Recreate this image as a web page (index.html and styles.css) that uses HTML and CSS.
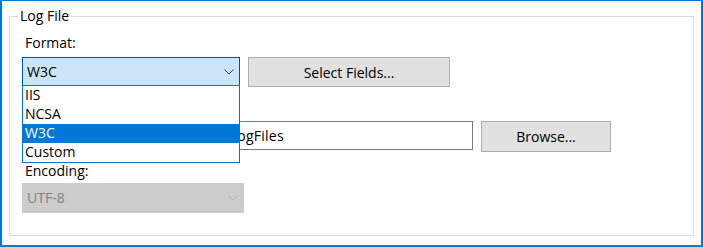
FILE: index.html
```html
<!DOCTYPE html>
<html lang="en">
<head>
    <meta charset="UTF-8"/>
    <title>Log File</title>
    <link rel="stylesheet" href="styles.css">
</head>
<body>

<div class="window">
    <fieldset class="group">
        <legend>Log File</legend>

        <!-- Format -->
        <div class="field-label">Format:</div>
        <div class="row">
            <div class="combo open">
                <span class="combo-value">W3C</span>
                <svg class="chevron" width="10" height="6" viewBox="0 0 10 6">
                    <polyline points="0.5,0.5 5,5 9.5,0.5" fill="none" stroke="#3c3c3c" stroke-width="1"/>
                </svg>
                <ul class="combo-list">
                    <li>IIS</li>
                    <li>NCSA</li>
                    <li class="selected">W3C</li>
                    <li>Custom</li>
                </ul>
            </div>
            <button class="btn btn-fields">Select Fields...</button>
        </div>

        <!-- Directory (label is covered by the open list) -->
        <div class="field-label label-dir"></div>
        <div class="row row-top">
            <input class="text-input" type="text" value="%SystemDrive%\inetpub\logs\LogFiles">
            <button class="btn btn-browse">Browse...</button>
        </div>

        <!-- Encoding -->
        <div class="field-label label-enc">Encoding:</div>
        <div class="combo disabled encoding">
            <span class="combo-value">UTF-8</span>
            <svg class="chevron" width="10" height="6" viewBox="0 0 10 6">
                <polyline points="0.5,0.5 5,5 9.5,0.5" fill="none" stroke="#b4b4b4" stroke-width="1"/>
            </svg>
        </div>
    </fieldset>
</div>

</body>
</html>
```

FILE: styles.css
```css
body {
    margin: 0;
    font-family: "Open Sans", "Noto Sans", sans-serif;
    font-size: 14px;
    color: #000;
    background: #fff;
}

.window {
    width: 703px;
    height: 247px;
    box-sizing: border-box;
    border: 2px solid #0078d7;
    border-top-width: 1px;
    padding: 5px 7px 0 7px;
    background: #fff;
}

.group {
    margin: 0;
    border: 1px solid #dcdcdc;
    padding: 7px 12px 22px 12px;
}

.group legend {
    padding: 0 2px;
    margin-left: -4px;
    line-height: 20px;
}

.field-label {
    line-height: 20px;
    height: 20px;
    padding-left: 3px;
    margin-bottom: 4px;
}

.label-dir {
    margin-top: 10px;
}

.label-enc {
    height: 16px;
    line-height: 16px;
    margin-top: 11px;
    margin-bottom: 4px;
}

.row {
    display: flex;
    gap: 8px;
    align-items: center;
}

.row-top {
    align-items: flex-start;
}

/* Combo box */
.combo {
    position: relative;
    display: flex;
    align-items: center;
    justify-content: space-between;
    box-sizing: border-box;
    width: 218px;
    height: 30px;
    padding: 0 5px 0 4px;
    border: 1px solid #cccccc;
    background: #e5e5e5;
}

.combo.open {
    border-color: #005499;
    background: #cce4f7;
}

.combo.disabled {
    border-color: #cccccc;
    background: #cccccc;
    color: #838383;
}

.combo.encoding {
    width: 222px;
}

.combo-value {
    line-height: 20px;
}

.chevron {
    display: block;
}

.combo-list {
    position: absolute;
    top: 27px;
    left: -1px;
    width: 218px;
    box-sizing: border-box;
    margin: 0;
    padding: 0;
    list-style: none;
    border: 1px solid #0078d7;
    background: #fff;
    color: #000;
    z-index: 10;
}

.combo-list li {
    height: 19px;
    line-height: 18px;
    padding-left: 2px;
}

.combo-list li.selected {
    background: #0078d7;
    color: #fff;
}

/* Buttons */
.btn {
    box-sizing: border-box;
    height: 30px;
    border: 1px solid #adadad;
    background: #e1e1e1;
    font-family: inherit;
    font-size: 14px;
    color: #000;
    padding: 0;
}

.btn-fields {
    width: 202px;
}

.btn-browse {
    width: 130px;
    height: 31px;
}

/* Text input */
.text-input {
    box-sizing: border-box;
    width: 451px;
    height: 29px;
    margin: 0;
    padding: 0 3px;
    border: 1px solid #7a7a7a;
    font-family: inherit;
    font-size: 14px;
    letter-spacing: 0.25px;
    color: #000;
    outline: none;
}
```
